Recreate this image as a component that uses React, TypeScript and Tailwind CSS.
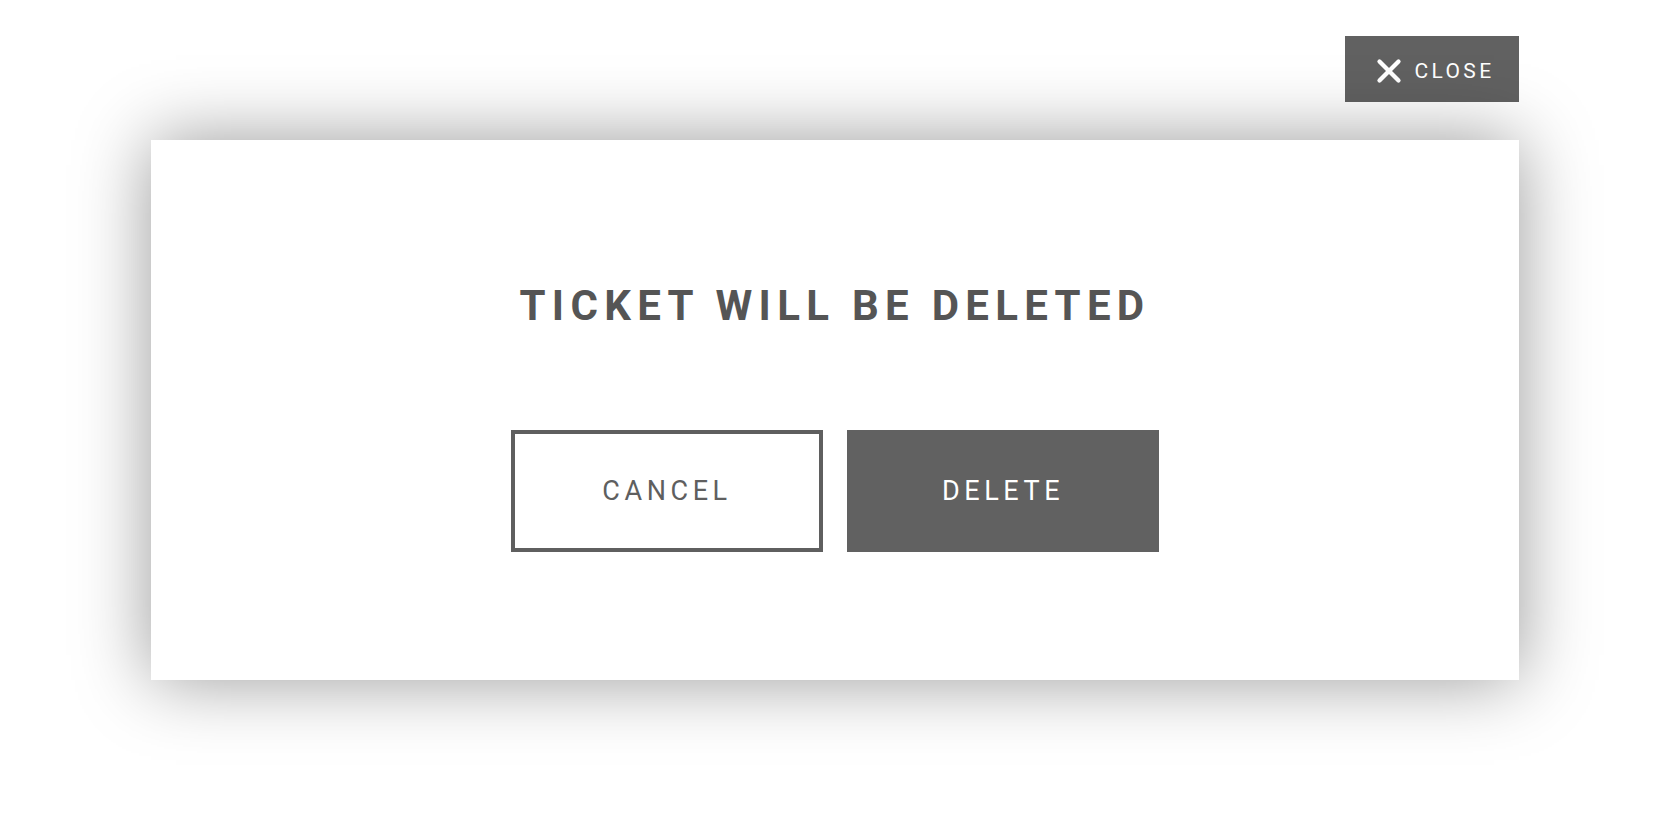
import { X } from 'lucide-react'

export default function App() {
  return (
    <div className="min-h-screen bg-white font-['Roboto',sans-serif]">
      <div className="mx-auto flex w-[1368px] flex-col pt-[36px]">
        {/* 关闭按钮 */}
        <button className="mb-[38px] flex h-[66px] w-[174px] items-center justify-center gap-[7px] self-end bg-[#616161] pt-[5px] text-white">
          <X size={38} strokeWidth={2.7} className="-mt-[1px]" />
          <span className="text-[21px] tracking-[0.16em]">CLOSE</span>
        </button>

        {/* 弹窗 */}
        <div className="flex h-[540px] flex-col items-center bg-white pt-[145px] shadow-[0_0_70px_rgba(0,0,0,0.4)]">
          <h1 className="text-[42px] leading-none font-bold tracking-[0.15em] text-[#555555]">
            TICKET WILL BE DELETED
          </h1>
          <div className="mt-[103px] flex gap-[24px]">
            <button className="flex h-[122px] w-[312px] items-center justify-center border-[4px] border-[#5f5f5f] text-[27px] tracking-[0.17em] text-[#5f5f5f]">
              CANCEL
            </button>
            <button className="flex h-[122px] w-[312px] items-center justify-center bg-[#616161] text-[27px] tracking-[0.17em] text-white">
              DELETE
            </button>
          </div>
        </div>
      </div>
    </div>
  )
}
